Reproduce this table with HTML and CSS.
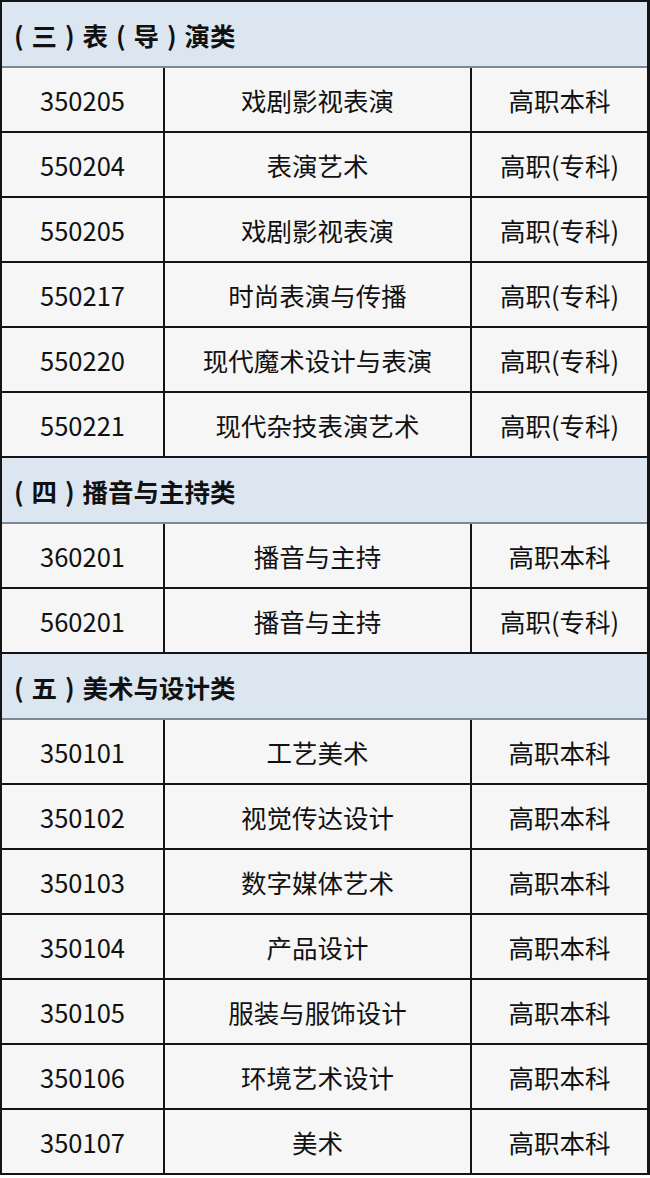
FILE: index.html
```html
<!DOCTYPE html>
<html lang="zh-CN">
<head>
<meta charset="utf-8">
<title>专业目录</title>
<link rel="stylesheet" href="styles.css">
</head>
<body>
<div class="table">
  <div class="section"><span class="p">(</span><span class="p">三</span><span class="p">)</span><span class="p">表</span><span class="p">(</span><span class="p">导</span><span class="p">)</span>演类</div>
  <div class="row"><div class="c1">350205</div><div class="c2">戏剧影视表演</div><div class="c3">高职本科</div></div>
  <div class="row"><div class="c1">550204</div><div class="c2">表演艺术</div><div class="c3">高职(专科)</div></div>
  <div class="row"><div class="c1">550205</div><div class="c2">戏剧影视表演</div><div class="c3">高职(专科)</div></div>
  <div class="row"><div class="c1">550217</div><div class="c2">时尚表演与传播</div><div class="c3">高职(专科)</div></div>
  <div class="row"><div class="c1">550220</div><div class="c2">现代魔术设计与表演</div><div class="c3">高职(专科)</div></div>
  <div class="row"><div class="c1">550221</div><div class="c2">现代杂技表演艺术</div><div class="c3">高职(专科)</div></div>
  <div class="section"><span class="p">(</span><span class="p">四</span><span class="p">)</span>播音与主持类</div>
  <div class="row"><div class="c1">360201</div><div class="c2">播音与主持</div><div class="c3">高职本科</div></div>
  <div class="row"><div class="c1">560201</div><div class="c2">播音与主持</div><div class="c3">高职(专科)</div></div>
  <div class="section"><span class="p">(</span><span class="p">五</span><span class="p">)</span>美术与设计类</div>
  <div class="row"><div class="c1">350101</div><div class="c2">工艺美术</div><div class="c3">高职本科</div></div>
  <div class="row"><div class="c1">350102</div><div class="c2">视觉传达设计</div><div class="c3">高职本科</div></div>
  <div class="row"><div class="c1">350103</div><div class="c2">数字媒体艺术</div><div class="c3">高职本科</div></div>
  <div class="row"><div class="c1">350104</div><div class="c2">产品设计</div><div class="c3">高职本科</div></div>
  <div class="row"><div class="c1">350105</div><div class="c2">服装与服饰设计</div><div class="c3">高职本科</div></div>
  <div class="row"><div class="c1">350106</div><div class="c2">环境艺术设计</div><div class="c3">高职本科</div></div>
  <div class="row"><div class="c1">350107</div><div class="c2">美术</div><div class="c3">高职本科</div></div>
</div>
</body>
</html>
```
FILE: styles.css
```css
html, body {
  margin: 0;
  padding: 0;
  background: #ffffff;
}
.table {
  box-sizing: border-box;
  width: 650px;
  border-top: 2px solid #141414;
  border-left: 2px solid #141414;
  border-right: 3px solid #141414;
  font-family: "Noto Sans CJK SC", "Noto Sans", sans-serif;
  color: #111111;
  font-size: 25.5px;
}
.section {
  box-sizing: border-box;
  height: 66px;
  background: #dce6f0;
  font-weight: bold;
  display: flex;
  align-items: center;
  padding-left: 4px;
  border-bottom: 2px solid #7d8896;
}
.section .p {
  display: inline-block;
  width: 25.5px;
  text-align: center;
}
.row {
  box-sizing: border-box;
  display: grid;
  grid-template-columns: 161px 307px 1fr;
  height: 65px;
  background: #f6f6f6;
  border-bottom: 2px solid #141414;
}
.row > div {
  display: flex;
  align-items: center;
  justify-content: center;
  box-sizing: border-box;
}
.c2, .c3 {
  border-left: 2px solid #141414;
}
```
